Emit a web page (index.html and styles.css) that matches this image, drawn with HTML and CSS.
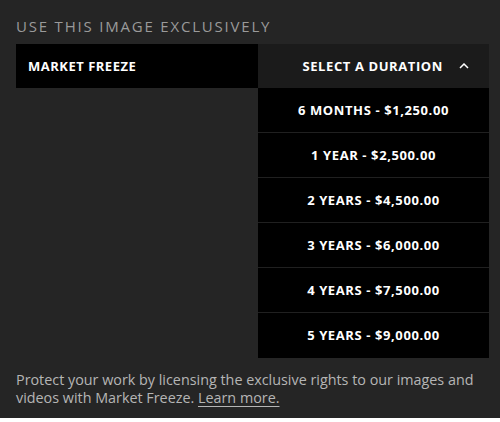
FILE: index.html
```html
<!DOCTYPE html>
<html>
<head>
<meta charset="utf-8">
<link rel="stylesheet" href="styles.css">
</head>
<body>
<div class="panel">
  <h2 class="title">USE THIS IMAGE EXCLUSIVELY</h2>
  <div class="row">
    <div class="product">MARKET FREEZE</div>
    <div class="picker">
      <div class="picker-head">
        <span>SELECT A DURATION</span>
        <svg class="chev" width="10" height="6" viewBox="0 0 10 6"><path d="M1 5 L5 1 L9 5" fill="none" stroke="#fff" stroke-width="1.5"/></svg>
      </div>
      <ul class="options">
        <li>6 MONTHS - $1,250.00</li>
        <li>1 YEAR - $2,500.00</li>
        <li>2 YEARS - $4,500.00</li>
        <li>3 YEARS - $6,000.00</li>
        <li>4 YEARS - $7,500.00</li>
        <li>5 YEARS - $9,000.00</li>
      </ul>
    </div>
  </div>
  <p class="desc">Protect your work by licensing the exclusive rights to our images and videos with Market Freeze. <a class="link" href="#">Learn more.</a></p>
</div>
</body>
</html>
```
FILE: styles.css
```css
html, body { margin: 0; padding: 0; background: #fff; }
.panel {
  background: #252525;
  height: 418px;
  box-sizing: border-box;
  padding: 16px 11px 0 16px;
  font-family: "Open Sans", sans-serif;
}
.title {
  margin: 0 0 8px 0;
  font-size: 15px;
  line-height: 20px;
  font-weight: 400;
  letter-spacing: 1.8px;
  color: #9a9a9a;
}
.row { display: flex; align-items: flex-start; }
.product {
  width: 242px;
  height: 44px;
  background: #000;
  color: #fff;
  font-size: 13px;
  font-weight: 700;
  letter-spacing: 0.5px;
  line-height: 44px;
  padding-left: 12px;
  box-sizing: border-box;
}
.picker { width: 231px; }
.picker-head {
  height: 44px;
  background: #1b1b1b;
  color: #fff;
  font-size: 13px;
  font-weight: 700;
  letter-spacing: 0.6px;
  display: flex;
  align-items: center;
  justify-content: flex-end;
  padding-right: 20px;
  gap: 16px;
}
.chev { display: block; }
.options { list-style: none; margin: 0; padding: 0; }
.options li {
  height: 44px;
  line-height: 44px;
  border-bottom: 1px solid #202020;
  background: #000;
  color: #fff;
  font-size: 13px;
  font-weight: 700;
  letter-spacing: 0.6px;
  text-align: center;
}
.options li:last-child { border-bottom: 1px solid #000; }
.desc {
  margin: 13px 0 0 0;
  font-size: 14.35px;
  line-height: 18px;
  color: #b5b5b5;
}
.link { color: #b5b5b5; text-decoration: underline; text-underline-offset: 3px; }
```
